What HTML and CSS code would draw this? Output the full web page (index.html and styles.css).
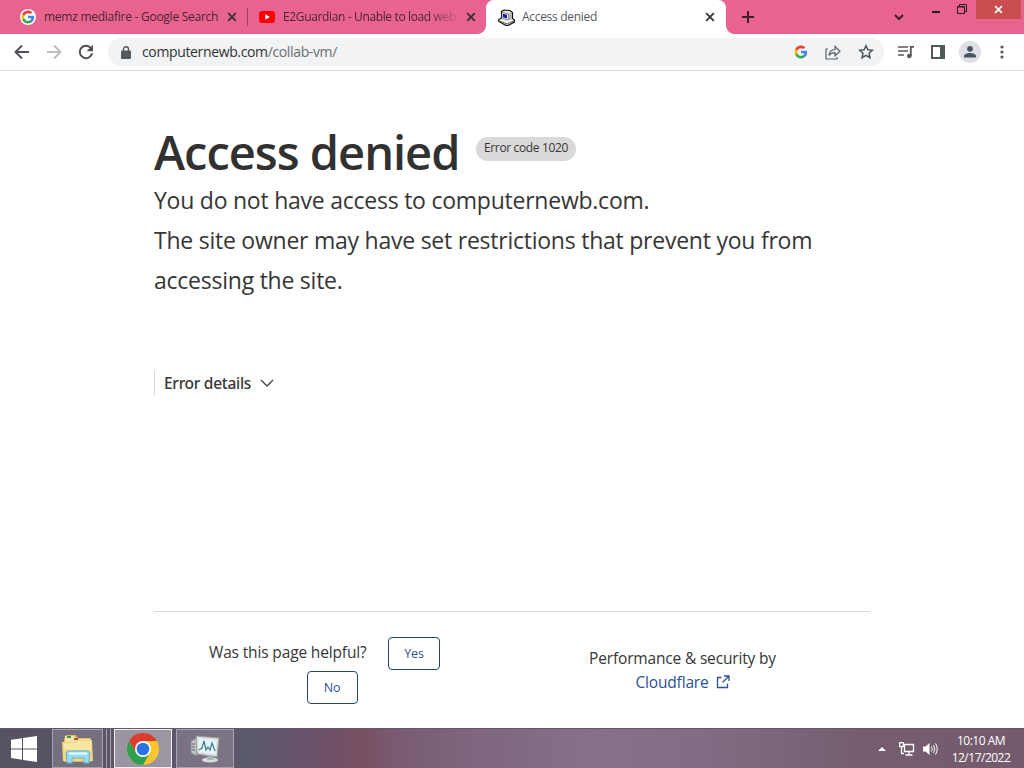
FILE: index.html
```html
<!DOCTYPE html>
<html lang="en">
<head>
    <meta charset="UTF-8">
    <meta name="viewport" content="width=device-width, initial-scale=1.0">
    <title>Access denied</title>
    <link rel="stylesheet" href="styles.css">
</head>
<body>
    <svg class="defs">
        <symbol id="google" viewBox="0 0 24 24">
            <path fill="#4285F4" d="M22.56 12.25c0-.78-.07-1.53-.2-2.25H12v4.26h5.92c-.26 1.37-1.04 2.53-2.21 3.31v2.77h3.57c2.08-1.92 3.28-4.74 3.28-8.09z"/>
            <path fill="#34A853" d="M12 23c2.97 0 5.46-.98 7.28-2.66l-3.57-2.77c-.98.66-2.23 1.06-3.71 1.06-2.86 0-5.29-1.93-6.16-4.53H2.18v2.84C3.99 20.53 7.7 23 12 23z"/>
            <path fill="#FBBC05" d="M5.84 14.09c-.22-.66-.35-1.36-.35-2.09s.13-1.43.35-2.09V7.07H2.18C1.43 8.55 1 10.22 1 12s.43 3.45 1.18 4.93l3.66-2.84z"/>
            <path fill="#EA4335" d="M12 5.38c1.62 0 3.06.56 4.21 1.64l3.15-3.15C17.45 2.09 14.97 1 12 1 7.7 1 3.99 3.47 2.18 7.07l3.66 2.84c.87-2.6 3.3-4.53 6.16-4.53z"/>
        </symbol>
        <symbol id="close" viewBox="0 0 10 10">
            <path d="M1.2 1.2l7.6 7.6M8.8 1.2L1.2 8.8" fill="none" stroke="currentColor" stroke-width="1.8"/>
        </symbol>
    </svg>

    <div class="tabs">
        <div class="tab">
            <span class="favicon round"><svg width="14" height="14"><use href="#google"/></svg></span>
            <span class="tab-title t1">memz mediafire - Google Search</span>
            <svg class="tab-close" width="10" height="10"><use href="#close"/></svg>
        </div>
        <div class="tab second">
            <span class="favicon"><svg width="16" height="12" viewBox="0 0 16 12"><rect width="16" height="12" rx="3" fill="#f00"/><path d="M6.2 3.2v5.6L11 6z" fill="#fff"/></svg></span>
            <span class="tab-title t2">E2Guardian - Unable to load web</span>
            <svg class="tab-close" width="10" height="10"><use href="#close"/></svg>
        </div>
        <div class="tab active">
            <span class="favicon">
                <svg width="17" height="17" viewBox="0 0 17 17">
                    <path d="M3.500 2.500L6 1l6 .5 2.500 2v6l2 1.500v2l-6.500 3.500h-2L.8 12.500v-2l2.700-1.500z" fill="#ddd" stroke="#111" stroke-width="1.200"/>
                    <path d="M4 3.500l6.500 1.500v6L4 9z" fill="#f4f4f4" stroke="#555" stroke-width=".6"/>
                    <path d="M5 4.700l4 1.100v3.700L5 8.200z" fill="#1a1aa8"/>
                    <path d="M10.800 5L14 3.700v6l-3.200 1.500z" fill="#b4b4b4"/>
                    <path d="M1.500 12l7.500 3 7-3.200" fill="none" stroke="#333" stroke-width=".7"/>
                    <path d="M2.500 10.800l6.500 2.500 5.500-2.500" fill="none" stroke="#fff" stroke-width="1.200"/>
                </svg>
            </span>
            <span class="tab-title t3">Access denied</span>
            <svg class="tab-close" width="10" height="10"><use href="#close"/></svg>
        </div>
        <svg class="new-tab" width="12" height="12" viewBox="0 0 12 12"><path d="M6 0v12M0 6h12" stroke="#3c1f2b" stroke-width="2"/></svg>
        <svg class="tab-search" width="10" height="7" viewBox="0 0 10 7"><path d="M1 1l4 4 4-4" fill="none" stroke="#3c1f2b" stroke-width="2"/></svg>
        <div class="window-buttons">
            <svg width="8" height="16" viewBox="0 0 8 16"><path d="M0 12h8" stroke="#2a1a20" stroke-width="2"/></svg>
            <svg class="restore" width="10" height="10" viewBox="0 0 10 10"><path d="M.5 2.5h7v7h-7zM2.5 2V.5h7v7H8" fill="none" stroke="#2a1a20"/><path d="M.5 3h7" stroke="#2a1a20"/></svg>
            <div class="window-close"><svg width="9" height="9" viewBox="0 0 10 10"><use href="#close"/></svg></div>
        </div>
    </div>

    <div class="toolbar">
        <div class="nav">
            <svg width="16" height="16" viewBox="0 0 16 16"><path d="M15 8H2M8 1.5L1.5 8 8 14.500" fill="none" stroke="#4d5054" stroke-width="1.9"/></svg>
            <svg width="16" height="16" viewBox="0 0 16 16"><path d="M1 8h13M8 1.500L14.500 8 8 14.500" fill="none" stroke="#bbbdc0" stroke-width="1.9"/></svg>
            <svg width="16" height="16" viewBox="0 0 16 16"><path d="M13.300 4.700A6.200 6.200 0 1 0 14.100 9.300" fill="none" stroke="#4d5054" stroke-width="2"/><path d="M15 .8v6.400H8.600z" fill="#4d5054"/></svg>
        </div>
        <div class="address">
            <svg width="10" height="13" viewBox="0 0 10 13"><rect y="4.500" width="10" height="8.500" rx="1" fill="#55585c"/><path d="M2.500 5V3.200a2.500 2.500 0 0 1 5 0V5" fill="none" stroke="#55585c" stroke-width="1.400"/></svg>
            <span class="url">computernewb.com<span>/collab-vm/</span></span>
            <div class="address-icons">
                <svg width="14" height="14"><use href="#google"/></svg>
                <svg width="16" height="15" viewBox="0 0 16 15"><path d="M3 4H1v10h11v-2M4 10.500c.3-4 2.300-5.800 6-6V1.500l5 4.700-5 4.600V7.700c-2.800 0-4.700.8-6 2.800z" fill="none" stroke="#5f6368" stroke-width="1.200"/></svg>
                <svg width="16" height="16" viewBox="0 0 16 16"><path d="M8 1.700l1.850 4.100 4.450.45-3.300 3 .95 4.400L8 11.400l-3.950 2.250.95-4.400-3.300-3 4.450-.45z" fill="none" stroke="#505459" stroke-width="1.500"/></svg>
            </div>
        </div>
        <div class="tools">
            <svg width="16" height="14" viewBox="0 0 16 14"><path d="M0 2h10M0 6h10M0 10h6" stroke="#55585c" stroke-width="1.600"/><path d="M12.800 11V1.800H16" fill="none" stroke="#55585c" stroke-width="1.800"/><circle cx="11.300" cy="11" r="2.300" fill="#55585c"/></svg>
            <svg width="14" height="14" viewBox="0 0 14 14"><path d="M1 1h12v12H1z" fill="none" stroke="#50585a" stroke-width="2"/><path d="M9 1h4v12H9z" fill="#50585a"/></svg>
            <svg class="avatar" width="22" height="22" viewBox="0 0 22 22"><circle cx="11" cy="11" r="11" fill="#dee0e6"/><circle cx="11" cy="7.800" r="2.900" fill="#485260"/><path d="M5 16.500v-1.300c0-2 3.500-3.200 6-3.200s6 1.200 6 3.200v1.300z" fill="#485260"/></svg>
            <svg width="4" height="14" viewBox="0 0 4 14"><g fill="#55585c"><circle cx="2" cy="2" r="1.600"/><circle cx="2" cy="7" r="1.600"/><circle cx="2" cy="12" r="1.600"/></g></svg>
        </div>
    </div>

    <div class="page">
        <div class="heading">
            <h1>Access denied</h1>
            <span class="code">Error code 1020</span>
        </div>
        <p class="lead">You do not have access to computernewb.com.</p>
        <p class="lead">The site owner may have set restrictions that prevent you from<br>accessing the site.</p>
        <div class="details">
            <span>Error details</span>
            <svg width="14" height="8" viewBox="0 0 14 8"><path d="M1 1l6 6 6-6" fill="none" stroke="#404040" stroke-width="1.300"/></svg>
        </div>
        <div class="footer">
            <div class="feedback">
                <div class="feedback-row">
                    <span class="question">Was this page helpful?</span>
                    <button type="button">Yes</button>
                </div>
                <button type="button" class="no">No</button>
            </div>
            <div class="security">
                <span>Performance &amp; security by</span>
                <a href="#"><span>Cloudflare</span>
                    <svg width="14" height="14" viewBox="0 0 14 14"><path d="M5.500 2.500h-4v10h10v-4M8 1h5v5M13 1L6.500 7.500" fill="none" stroke="#2c5192" stroke-width="1.300"/></svg>
                </a>
            </div>
        </div>
    </div>

    <div class="taskbar">
        <div class="start"><svg width="26" height="26" viewBox="0 0 26 26"><path d="M0 3.800L11 2.200v10.200H0zM12 2L26 0v12.400H12zM0 13.400h11v10.300L0 22.100zM12 13.400h14V26l-14-2.100z" fill="#fff"/></svg></div>
        <div class="task explorer">
            <svg width="34" height="30" viewBox="0 0 34 30">
                <path d="M3 5l2-4h10l2 3h13v24H3z" fill="#d9b765"/>
                <path d="M4 2h9l2 3h14v5H4z" fill="#f6e5a4"/>
                <path d="M6 2h4v2H6z" fill="#3e9a4b"/><path d="M13 4h4v2h-4z" fill="#c0483a"/><path d="M20 6h5v2h-5z" fill="#4484c9"/>
                <path d="M1 8h13l2-2h15l1 21H2z" fill="#f0d582"/>
                <path d="M3 9h12l2-2h13l.5 9H3z" fill="#f7e5a2"/>
                <path d="M6 29l-.5-10q.3-2 2-2h19q1.700 0 2 2l-.5 10h-5v-5H11v5z" fill="#9bdcf0" stroke="#5cb3d2"/>
                <path d="M8 19.500h18" stroke="#e4fbff" stroke-width="2"/>
            </svg>
        </div>
        <div class="stack"></div>
        <div class="stack"></div>
        <div class="task chrome">
            <svg width="32" height="32" viewBox="0 0 32 32">
                <circle cx="16" cy="16" r="16" fill="#fbc62d"/>
                <path d="M2.140 8A16 16 0 0 1 29.860 8H16L9.070 20z" fill="#dc3c30"/>
                <path d="M2.140 8A16 16 0 0 0 16 32l6.930-12H9.070z" fill="#2da050"/>
                <circle cx="16" cy="16" r="8" fill="#fff"/>
                <circle cx="16" cy="16" r="6.300" fill="#2d72e3"/>
            </svg>
        </div>
        <div class="task monitor">
            <svg width="30" height="28" viewBox="0 0 30 28">
                <path d="M1 6l6-3v18l-6-3z" fill="#bfc3c5" stroke="#818a8d"/>
                <path d="M2 9h3M2 12h3M2 15h3" stroke="#636b70"/>
                <ellipse cx="20" cy="25" rx="8" ry="2.500" fill="#d9dcdc"/><path d="M17 20h7v5h-7z" fill="#aeb5b7"/>
                <path d="M6 1l23 2-2 19-20-3z" fill="#dce0df" stroke="#949c9e"/>
                <path d="M8.500 3.500l18 1.500-1.500 14-16-2z" fill="#e9f4f8"/>
                <path d="M9 15l3-2 2-7 2 9 2-3 2 3 2-7 3 8" fill="none" stroke="#397891" stroke-width="1.200"/>
            </svg>
        </div>
        <div class="tray">
            <svg width="8" height="4" viewBox="0 0 8 4"><path d="M0 4l4-4 4 4z" fill="#fff"/></svg>
            <svg class="network" width="16" height="14" viewBox="0 0 16 14"><path d="M5.500 2.500h9v7h-9zM10 10v3M6.500 13h7M.7.700h3.600v4H.7zM2.500 5v6.500H5" fill="none" stroke="#fff" stroke-width="1.300"/></svg>
            <svg class="volume" width="16" height="14" viewBox="0 0 16 14"><path d="M1 4.500h2.500L7.500 1v12L3.500 9.500H1z" fill="#fff"/><path d="M9.500 4.500q1.600 2.500 0 5M11.500 3q2.600 4 0 8M13.500 1.500q3.400 5.500 0 11" fill="none" stroke="#fff"/></svg>
            <div class="clock"><span>10:10 AM</span><span>12/17/2022</span></div>
        </div>
    </div>
</body>
</html>
```
FILE: styles.css
```css
* {
    box-sizing: border-box;
}
body {
    margin: 0;
    width: 1024px;
    height: 768px;
    overflow: hidden;
    display: flex;
    flex-direction: column;
    font-family: "Open Sans", "Noto Sans", sans-serif;
    background-color: #fff;
    color: #363636;
}
svg {
    display: block;
    flex-shrink: 0;
}
.defs {
    display: none;
}
span {
    white-space: nowrap;
}

/* tab strip */
.tabs {
    height: 34px;
    flex-shrink: 0;
    display: flex;
    align-items: center;
    background-color: #e8648f;
    padding-left: 8px;
}
.tab {
    height: 34px;
    display: flex;
    align-items: center;
    width: 239px;
    padding: 0 10px 0 12px;
    color: #4d2535;
}
.tab.second {
    background: linear-gradient(#9f3e61, #9f3e61) 0 8px / 1px 18px no-repeat;
}
.favicon {
    width: 16px;
    height: 16px;
    display: flex;
    align-items: center;
    justify-content: center;
    margin-right: 8px;
    flex-shrink: 0;
}
.round {
    background-color: #fff;
    border-radius: 50%;
}
.tab-title {
    font-size: 12px;
    line-height: 18px;
    overflow: hidden;
    flex: 1;
}
.tab-close {
    margin-left: 8px;
    color: #333;
}
.t1 {
    letter-spacing: -0.26px;
}
.t2 {
    letter-spacing: -0.36px;
    -webkit-mask-image: linear-gradient(to right, #000 145px, transparent 178px);
    mask-image: linear-gradient(to right, #000 145px, transparent 178px);
}
.t3 {
    letter-spacing: -0.3px;
}
.tab.active {
    position: relative;
    width: 240px;
    padding-right: 11px;
    background-color: #fff;
    border-radius: 8px 8px 0 0;
    color: #55585b;
}
.tab.active::before,
.tab.active::after {
    content: "";
    position: absolute;
    bottom: 0;
    width: 8px;
    height: 8px;
}
.tab.active::before {
    left: -8px;
    background: radial-gradient(circle at 0 0, transparent 7.5px, #fff 8px);
}
.tab.active::after {
    right: -8px;
    background: radial-gradient(circle at 100% 0, transparent 7.5px, #fff 8px);
}
.new-tab {
    margin-left: 16px;
}
.tab-search {
    margin-left: 140px;
}
.window-buttons {
    margin-left: auto;
    align-self: flex-start;
    display: flex;
    height: 20px;
    padding-right: 3px;
}
.restore {
    margin: 4px 9px 0 17px;
}
.window-close {
    width: 45px;
    height: 19px;
    display: flex;
    align-items: center;
    justify-content: center;
    background-color: #c84e50;
    color: #fff;
}

/* toolbar */
.toolbar {
    height: 37px;
    flex-shrink: 0;
    display: flex;
    align-items: center;
    border-bottom: 1px solid #dadcdd;
    padding-left: 14px;
}
.nav {
    display: flex;
    gap: 16px;
}
.address {
    width: 776px;
    height: 28px;
    margin-left: 14px;
    padding: 0 10px 0 13px;
    display: flex;
    align-items: center;
    background-color: #f1f3f4;
    border-radius: 14px;
}
.url {
    margin-left: 11px;
    font-size: 14px;
    line-height: 18px;
    letter-spacing: -0.36px;
    color: #303235;
}
.url span {
    color: #6b6f73;
}
.address-icons {
    margin-left: auto;
    display: flex;
    align-items: center;
    gap: 17px;
}
.tools {
    display: flex;
    align-items: center;
    margin-left: 14px;
    gap: 17px;
}
.avatar {
    margin: 0 2px 0 -3px;
}

/* error page */
.page {
    flex: 1;
    padding-left: 154px;
}
.heading {
    display: flex;
    height: 64px;
    margin-top: 45px;
}
h1 {
    margin: 0;
    width: 322px;
    font-size: 47px;
    font-weight: 600;
    line-height: 72px;
    letter-spacing: -1px;
    white-space: nowrap;
    color: #313131;
}
.code {
    width: 100px;
    height: 24px;
    margin-top: 21px;
    border-radius: 12px;
    background-color: #d9d9d9;
    font-size: 12px;
    line-height: 22px;
    letter-spacing: -0.35px;
    text-align: center;
}
.lead {
    margin: 0;
    font-size: 23px;
    line-height: 40px;
    letter-spacing: -0.24px;
    white-space: nowrap;
}
.details {
    display: flex;
    align-items: center;
    height: 25px;
    margin-top: 70px;
    padding-left: 9px;
    border-left: 1px solid #d9d9d9;
    font-family: "Noto Sans", "Open Sans", sans-serif;
    font-size: 15.5px;
    font-weight: 500;
    letter-spacing: -0.28px;
}
.details svg {
    margin-left: 9px;
}
.footer {
    display: flex;
    width: 716px;
    height: 117px;
    margin-top: 216px;
    border-top: 1px solid #d9d9d9;
}
.feedback {
    width: 356px;
    padding-top: 25px;
    display: flex;
    flex-direction: column;
    align-items: center;
}
.feedback-row {
    display: flex;
    align-items: flex-start;
    margin-left: -15px;
}
.question {
    width: 179px;
    font-size: 15.5px;
    line-height: 31px;
    letter-spacing: -0.15px;
}
.feedback button {
    width: 52px;
    height: 33px;
    padding: 0 0 1px;
    border: 1px solid #25447b;
    border-radius: 4px;
    background-color: #fff;
    color: #2c5192;
    font-family: inherit;
    font-size: 12.5px;
    letter-spacing: -0.2px;
}
.feedback .no {
    width: 51px;
    margin-top: 1px;
}
.security {
    width: 345px;
    padding-top: 34px;
    display: flex;
    flex-direction: column;
    align-items: center;
    font-size: 15.5px;
    line-height: 24px;
    letter-spacing: -0.17px;
}
.security a {
    display: flex;
    align-items: center;
    gap: 7px;
    color: #2c5192;
    text-decoration: none;
}

/* taskbar */
.taskbar {
    height: 40px;
    flex-shrink: 0;
    display: flex;
    align-items: center;
    background: linear-gradient(to right, #555261 0, #62576b 235px, #58596d 245px, #69516a 310px, #785062 360px, #795c72 400px, #80667f 480px, #87718a 600px, #826b82 720px, #755d6f 860px, #745b6c 1024px);
    border-top: 1px solid #665767;
}
.start {
    width: 52px;
    padding-left: 11px;
}
.task {
    height: 39px;
    display: flex;
    align-items: center;
    justify-content: center;
    border: 1px solid #a6a4af;
    background-color: rgba(255, 255, 255, 0.17);
}
.explorer {
    width: 51px;
}
.stack {
    width: 4px;
    height: 39px;
    border-right: 1px solid #a6a4af;
}
.chrome {
    width: 58px;
    margin-left: 3px;
    border-color: #eeeef1;
    background-color: rgba(255, 255, 255, 0.38);
}
.monitor {
    width: 58px;
    margin-left: 4px;
}
.tray {
    margin-left: auto;
    display: flex;
    align-items: center;
    color: #fff;
}
.network {
    margin-left: 13px;
}
.volume {
    margin-left: 7px;
}
.clock {
    width: 86px;
    display: flex;
    flex-direction: column;
    align-items: center;
    font-size: 12px;
    line-height: 17px;
    letter-spacing: -0.5px;
}
```
